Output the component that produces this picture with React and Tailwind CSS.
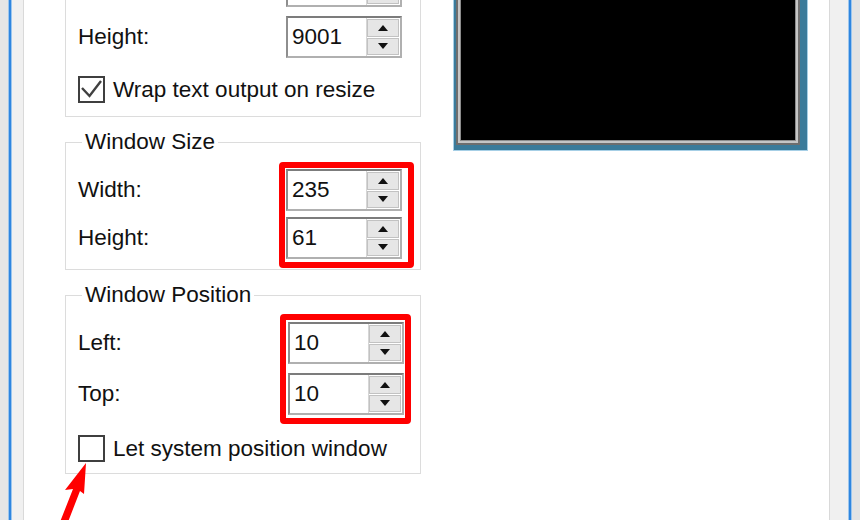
import React from 'react'

function Arrow({ up }) {
  return (
    <svg width="10" height="6" viewBox="0 0 10 6">
      <polygon points={up ? '5,0 10,6 0,6' : '0,0 10,0 5,6'} fill="#111" />
    </svg>
  )
}

function Spin({ value }) {
  return (
    <div className="flex h-[42px] w-[116px] border-2 border-[#b0b0b0] border-t-[#7c7c7c] border-l-[#8e8e8e] bg-white">
      <span className="flex-1 pl-[4px] leading-[38px]">{value}</span>
      <div className="flex w-[34px] flex-col gap-[1px] border-l border-[#d6d6d6] py-[1px] pr-[1px]">
        <div className="flex flex-1 items-center justify-center border border-[#c2c2c2] bg-[#e6e6e6]">
          <Arrow up />
        </div>
        <div className="flex flex-1 items-center justify-center border border-[#c2c2c2] bg-[#e6e6e6]">
          <Arrow />
        </div>
      </div>
    </div>
  )
}

function Check({ checked, label, className = '' }) {
  return (
    <div className={`flex items-center gap-[8px] ${className}`}>
      <div className="h-[27px] w-[27px] border-2 border-[#3f3f3f] bg-white">
        {checked && (
          <svg width="23" height="23" viewBox="0 0 23 23">
            <polyline points="2,10 9.5,18 21,3" fill="none" stroke="#404040" strokeWidth="2.4" />
          </svg>
        )}
      </div>
      <span className="leading-[27px]">{label}</span>
    </div>
  )
}

function Group({ title, className = '', children }) {
  return (
    <fieldset className={`min-w-0 border border-[#dcdcdc] p-0 ${className}`}>
      {title && <legend className="ml-[16px] px-[3px] leading-[26px]">{title}</legend>}
      {children}
    </fieldset>
  )
}

// 赤枠つきの入力ペア
function Highlighted({ rows, gap, pad, labelTop }) {
  return (
    <div className="flex">
      <div className="flex flex-1 flex-col" style={{ paddingTop: labelTop, gap }}>
        {rows.map((r) => (
          <div key={r.label} className="flex h-[42px] items-center">
            {r.label}
          </div>
        ))}
      </div>
      <div
        className="flex flex-col rounded-[4px] border-[6px] border-[#ff0000]"
        style={{ padding: pad, gap }}
      >
        {rows.map((r) => (
          <Spin key={r.label} value={r.value} />
        ))}
      </div>
    </div>
  )
}

export default function App() {
  return (
    <div
      className="relative flex h-[520px] w-[860px] overflow-hidden bg-[#f0f0f0] text-[22.5px] text-[#111]"
      style={{ fontFamily: '"Liberation Sans", Arial, sans-serif' }}
    >
      <div className="w-[8px] bg-[#e6e6e6]" />
      <div className="w-[1px] bg-[#9cc6ee]" />
      <div className="w-[2px] bg-[#2f86e0]" />
      <div className="w-[1px] bg-[#9cc6ee]" />
      <div className="w-[11px]" />
      <div className="w-[1px] bg-[#d9d9d9]" />

      <div className="flex w-[805px] items-start gap-[32px] bg-white pl-[41px] pr-[21px]">
        <div className="flex w-[356px] flex-col">
          {/* 上端で切れている Screen Buffer Size の残り */}
          <Group className="-mt-[56px]">
            <div className="flex flex-col gap-[9px] pl-[12px] pr-[18px] pt-[20px]">
              <div className="flex justify-end">
                <Spin value="" />
              </div>
              <div className="flex items-center justify-between">
                <span>Height:</span>
                <Spin value="9001" />
              </div>
            </div>
            <Check checked label="Wrap text output on resize" className="mt-[18px] mb-[13px] pl-[12px]" />
          </Group>

          <Group title="Window Size" className="mt-[12px]">
            <div className="pb-[1px] pl-[12px] pr-[6px] pt-[7px]">
              <Highlighted
                rows={[
                  { label: 'Width:', value: '235' },
                  { label: 'Height:', value: '61' },
                ]}
                gap="6px"
                pad="1px 6px 3px 1px"
                labelTop="7px"
              />
            </div>
          </Group>

          <Group title="Window Position" className="mt-[12px]">
            <div className="pl-[12px] pr-[9px] pt-[6px]">
              <Highlighted
                rows={[
                  { label: 'Left:', value: '10' },
                  { label: 'Top:', value: '10' },
                ]}
                gap="9px"
                pad="2px 1px 3px 2px"
                labelTop="8px"
              />
            </div>
            <Check label="Let system position window" className="mt-[11px] mb-[11px] pl-[12px]" />
          </Group>
        </div>

        <div className="-mt-[20px] h-[171px] w-[355px] border border-[#a6cfe6] bg-[#3b7b9a] pb-[5px] pl-[2px] pr-[7px] pt-[2px]">
          <div className="h-full border-2 border-[#6e6e6e]">
            <div className="h-full border-2 border-[#c6c6c6]">
              <div className="h-full border border-[#8c8c8c] bg-black" />
            </div>
          </div>
        </div>
      </div>

      <div className="w-[1px] bg-[#d9d9d9]" />
      <div className="w-[18px]" />
      <div className="w-[1px] bg-[#9cc6ee]" />
      <div className="w-[2px] bg-[#2f86e0]" />
      <div className="w-[1px] bg-[#9cc6ee]" />
      <div className="flex-1 bg-[#e3e3e3]" />

      <svg className="pointer-events-none absolute left-0 top-0" width="860" height="520">
        <polygon points="86,463 65,490 73,489 60,522 68,522 80,491 84,494" fill="#ff0000" />
      </svg>
    </div>
  )
}
